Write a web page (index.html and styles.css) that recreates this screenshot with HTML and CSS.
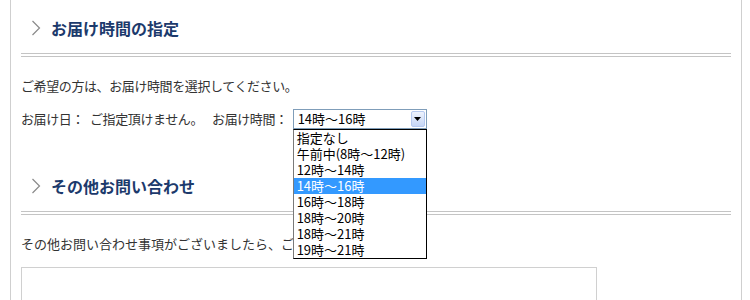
FILE: index.html
```html
<!DOCTYPE html>
<html lang="ja">
<head>
    <meta charset="UTF-8">
    <title>お届け時間の指定</title>
    <link rel="stylesheet" href="styles.css">
</head>
<body>
    <div class="page">
        <h2 class="ttl"><svg class="chev" width="10" height="16" viewBox="0 0 10 16"><polyline points="1.5,1 8.5,8 1.5,15" fill="none" stroke="#8a8a8a" stroke-width="1.2"/></svg>お届け時間の指定</h2>
        <div class="rule"></div>
        <p class="lead">ご希望の方は、お届け時間を選択してください。</p>
        <div class="row">
            <span class="lbl">お届け日：</span>
            <span class="val">ご指定頂けません。</span>
            <span class="lbl2">お届け時間：</span>
            <div class="sel">
                <div class="sel-box">
                    <span class="sel-text">14時〜16時</span>
                    <span class="sel-btn"><svg width="7" height="4" viewBox="0 0 7 4"><polygon points="0,0 7,0 3.5,4" fill="#000"/></svg></span>
                </div>
                <ul class="sel-list">
                    <li>指定なし</li>
                    <li>午前中(8時〜12時)</li>
                    <li>12時〜14時</li>
                    <li class="on">14時〜16時</li>
                    <li>16時〜18時</li>
                    <li>18時〜20時</li>
                    <li>18時〜21時</li>
                    <li>19時〜21時</li>
                </ul>
            </div>
        </div>

        <h2 class="ttl second"><svg class="chev" width="10" height="16" viewBox="0 0 10 16"><polyline points="1.5,1 8.5,8 1.5,15" fill="none" stroke="#8a8a8a" stroke-width="1.2"/></svg>その他お問い合わせ</h2>
        <div class="rule"></div>
        <p class="lead wide">その他お問い合わせ事項がございましたら、ご記入ください。</p>
        <textarea class="memo"></textarea>
    </div>
</body>
</html>
```

FILE: styles.css
```css
body {
    margin: 0;
    font-family: "Noto Sans CJK JP", sans-serif;
    font-size: 13px;
    color: #333;
    background: #fff;
}
.page {
    width: 732px;
    height: 300px;
    margin-left: 10px;
    padding: 16px 10px 0;
    box-sizing: border-box;
    overflow: hidden;
    border-left: 1px solid #cfcfcf;
    border-right: 1px solid #cfcfcf;
}
.ttl {
    margin: 0;
    padding-left: 11px;
    display: flex;
    align-items: center;
    height: 24px;
    font-size: 16px;
    font-weight: bold;
    color: #1c3a6c;
}
.ttl.second { margin-top: 45px; }
.chev { margin-right: 10px; margin-left: -1px; }
.rule {
    margin-top: 13px;
    height: 2px;
    border-top: 1px solid #c4c4c4;
    border-bottom: 1px solid #c4c4c4;
}
.lead {
    margin: 19px 0 0;
    line-height: 20px;
    letter-spacing: -0.4px;
    white-space: nowrap;
}
.lead.wide { letter-spacing: 0; }
.row {
    margin-top: 13px;
    display: flex;
    align-items: center;
    height: 20px;
    line-height: 20px;
    letter-spacing: -0.4px;
}
.lbl { margin-right: 6px; }
.val { margin-right: 9px; }
.lbl2 { margin-right: 5px; }
.sel {
    position: relative;
    width: 134px;
    height: 20px;
    letter-spacing: 0;
}
.sel-box {
    height: 20px;
    box-sizing: border-box;
    border: 1px solid #7f9db9;
    display: flex;
    align-items: center;
    justify-content: space-between;
    padding-left: 4px;
    color: #000;
}
.sel-btn {
    width: 14px;
    height: 16px;
    margin-right: 1px;
    box-sizing: border-box;
    border: 1px solid #b5c9f0;
    border-radius: 2px;
    background: linear-gradient(#eef3fd, #c6d6f6);
    display: flex;
    align-items: center;
    justify-content: center;
}
.sel-list {
    position: absolute;
    top: 20px;
    left: 0;
    width: 134px;
    margin: 0;
    padding: 0;
    list-style: none;
    box-sizing: border-box;
    border: 1px solid #000;
    border-left-color: #7a7a7a;
    background: #fff;
    color: #000;
}
.sel-list li {
    height: 16px;
    line-height: 16px;
    padding-left: 3px;
}
.sel-list li.on {
    background: #3399ff;
    color: #fff;
}
.lead + .memo { margin-top: 13px; }
.memo {
    display: block;
    width: 576px;
    height: 80px;
    box-sizing: border-box;
    border: 1px solid #d0d0d0;
    resize: none;
}
```
